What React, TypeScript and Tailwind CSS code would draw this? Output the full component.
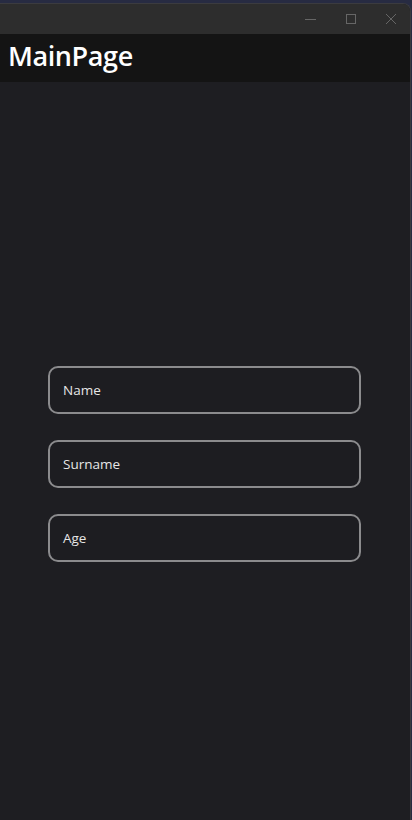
import React from "react";

function Entry({ label }: { label: string }) {
  return (
    <div className="w-[313px] h-[48px] rounded-[10px] border-2 border-[#8b8b8d] bg-[#1d1d21] flex items-center pl-[13px] pt-[1px]">
      <span className="text-[13.5px] text-[#e6e6e6]">{label}</span>
    </div>
  );
}

export default function App() {
  return (
    <div
      className="w-[412px] h-[820px] bg-[#272b42] pt-[3px] overflow-hidden"
      style={{ fontFamily: '"Open Sans", "Noto Sans", sans-serif' }}
    >
      <div className="w-[411px] h-[817px] rounded-tr-[8px] border-r border-t border-[#3b3b3f] bg-[#1e1e22] flex flex-col overflow-hidden">
        <div className="h-[30px] bg-[#2d2d2d] flex items-center justify-end shrink-0">
          <div className="w-[40px] h-full flex items-center justify-center">
            <div className="w-[11px] h-px bg-[#666]" />
          </div>
          <div className="w-[42px] h-full flex items-center justify-center">
            <div className="w-[10px] h-[10px] border border-[#666]" />
          </div>
          <div className="w-[38px] h-full flex items-center justify-center">
            <svg width="12" height="12" viewBox="0 0 12 12">
              <path d="M1 1 L11 11 M11 1 L1 11" stroke="#666" strokeWidth="1" />
            </svg>
          </div>
        </div>
        <div className="h-[48px] bg-[#141414] flex items-start pl-[8px] pt-[5px] shrink-0">
          <span className="text-[27px] font-semibold text-white leading-[34px] tracking-[-0.4px]">MainPage</span>
        </div>
        <div className="flex-1 flex flex-col items-start pl-[48px] pt-[284px] gap-[26px]">
          <Entry label="Name" />
          <Entry label="Surname" />
          <Entry label="Age" />
        </div>
      </div>
    </div>
  );
}
